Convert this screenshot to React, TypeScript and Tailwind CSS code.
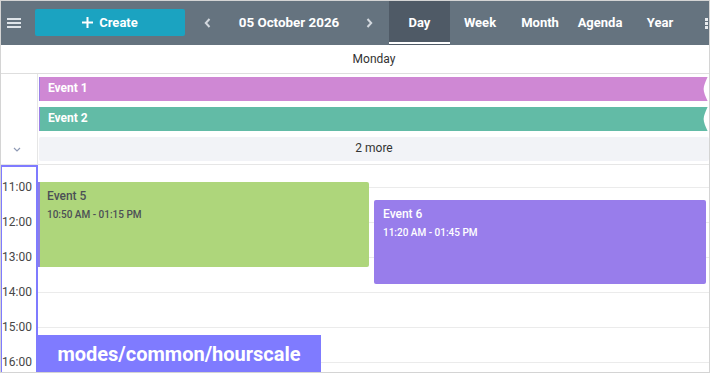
import React from "react";

const hours = ["11:00", "12:00", "13:00", "14:00", "15:00", "16:00"];

function Notch() {
  return (
    <svg width="6" height="24" viewBox="0 0 6 24" className="absolute right-0 top-0">
      <path d="M6 0 H4.6 C2.6 4 0.6 9 0.6 12 C0.6 15 2.6 20 4.6 24 H6 Z" fill="#ffffff" />
    </svg>
  );
}

export default function App() {
  return (
    <div
      className="relative w-[710px] h-[373px] border border-[#d4d4d4] flex flex-col overflow-hidden bg-white"
      style={{ fontFamily: "Roboto, 'Noto Sans', sans-serif" }}
    >
      {/* Header */}
      <div className="h-[44px] shrink-0 bg-[#65737f] flex items-stretch text-white">
        <div className="w-[34px] flex items-center pl-[6px]">
          <svg width="14" height="10" viewBox="0 0 14 10">
            <rect x="0" y="0" width="14" height="2" fill="#dfe4e9" />
            <rect x="0" y="4" width="14" height="2" fill="#dfe4e9" />
            <rect x="0" y="8" width="14" height="2" fill="#dfe4e9" />
          </svg>
        </div>
        <div className="self-start mt-[8px] w-[150px] h-[27px] rounded-[2px] bg-[#1ba3c1] flex items-center justify-center gap-[6px]">
          <svg width="11" height="11" viewBox="0 0 11 11">
            <path d="M5.5 0 V11 M0 5.5 H11" stroke="#ffffff" strokeWidth="2" />
          </svg>
          <span className="text-[13px] font-bold leading-none">Create</span>
        </div>
        <div className="w-[44px] flex items-center justify-center">
          <svg width="7" height="10" viewBox="0 0 7 10">
            <path d="M5.5 1 L1.8 5 L5.5 9" stroke="#d3d8de" strokeWidth="2" fill="none" />
          </svg>
        </div>
        <div className="w-[120px] flex items-center justify-center text-[13.4px] font-bold">05 October 2026</div>
        <div className="w-[40px] flex items-center justify-center">
          <svg width="7" height="10" viewBox="0 0 7 10">
            <path d="M1.5 1 L5.2 5 L1.5 9" stroke="#d3d8de" strokeWidth="2" fill="none" />
          </svg>
        </div>
        <div className="w-[61px] relative bg-[#4f5a66] flex items-center justify-center text-[13px] font-bold">
          Day
          <div className="absolute left-0 right-0 bottom-[1px] h-[2px] bg-white" />
        </div>
        <div className="w-[60px] flex items-center justify-center text-[13px] font-bold">Week</div>
        <div className="w-[60px] flex items-center justify-center text-[13px] font-bold">Month</div>
        <div className="w-[60px] flex items-center justify-center text-[13px] font-bold">Agenda</div>
        <div className="w-[60px] flex items-center justify-center text-[13px] font-bold">Year</div>
        <div className="flex items-center pl-[15px]">
          <svg width="3" height="11" viewBox="0 0 3 11">
            <rect x="0" y="0" width="3" height="3" fill="#e8ebee" />
            <rect x="0" y="4" width="3" height="3" fill="#e8ebee" />
            <rect x="0" y="8" width="3" height="3" fill="#e8ebee" />
          </svg>
        </div>
      </div>

      {/* Day header */}
      <div className="h-[29px] shrink-0 border-b border-[#dedede] flex">
        <div className="w-[38px]" />
        <div className="flex-1 flex items-center justify-center text-[12px] text-[#333333]">Monday</div>
      </div>

      {/* All-day area */}
      <div className="h-[91px] shrink-0 border-b border-[#e6e6e6] flex">
        <div className="w-[37px] border-r border-[#e6e6e6] flex items-end justify-center pb-[12px] pr-[4px]">
          <svg width="8" height="5" viewBox="0 0 8 5">
            <path d="M1 1 L4 4 L7 1" stroke="#8f9ab5" strokeWidth="1.2" fill="none" />
          </svg>
        </div>
        <div className="flex-1 pl-[1px] pt-[3px] flex flex-col gap-[6px]">
          <div className="relative h-[24px] bg-[#cf88d4] border-l border-[#9b7fe8] flex items-center pl-[8px] pb-[3px] text-white text-[12px] font-bold">
            Event 1
            <Notch />
          </div>
          <div className="relative h-[24px] bg-[#62bba6] border-l border-[#9b7fe8] flex items-center pl-[8px] pb-[3px] text-white text-[12px] font-bold">
            Event 2
            <Notch />
          </div>
          <div className="h-[24px] bg-[#f2f3f7] rounded-[2px] flex items-center justify-center pb-[2px] text-[12px] text-[#333333]">
            2 more
          </div>
        </div>
      </div>

      {/* Time grid */}
      <div className="flex-1 flex min-h-0">
        <div className="w-[36px] pt-[4px] flex flex-col">
          {hours.map((h) => (
            <div key={h} className="h-[35px] shrink-0 flex items-center pl-[1px] text-[12px] text-[#474747]">
              {h}
            </div>
          ))}
        </div>
        <div className="relative flex-1 pt-[22px] flex flex-col">
          {hours.map((h) => (
            <div key={h} className="h-[35px] shrink-0 border-t border-[#ebebeb]" />
          ))}
          <div className="absolute left-[1px] top-[17px] w-[331px] h-[85px] bg-[#aed67b] border-l-2 border-[#8c80e3] rounded-r-[2px] pl-[7px] pt-[7px]">
            <div className="text-[12px] font-medium text-[#4b4f56] leading-[14px]">Event 5</div>
            <div className="mt-[6px] text-[10px] font-medium text-[#4b4f56] leading-[12px]">10:50 AM - 01:15 PM</div>
          </div>
          <div className="absolute left-[337px] top-[35px] w-[332px] h-[84px] bg-[#987deb] rounded-[2px] pl-[9px] pt-[7px]">
            <div className="text-[12px] font-medium text-white leading-[14px]">Event 6</div>
            <div className="mt-[6px] text-[10px] font-medium text-white leading-[12px]">11:20 AM - 01:45 PM</div>
          </div>
        </div>
      </div>

      {/* Annotation overlay */}
      <div className="absolute left-[-1px] top-[164px] w-[38px] h-[209px] border-2 border-[#7f7bff] pointer-events-none" />
      <div className="absolute left-[36px] top-[334px] w-[284px] h-[38px] bg-[#7f7bff] flex items-center justify-center text-white text-[20px] font-bold">
        modes/common/hourscale
      </div>
    </div>
  );
}
